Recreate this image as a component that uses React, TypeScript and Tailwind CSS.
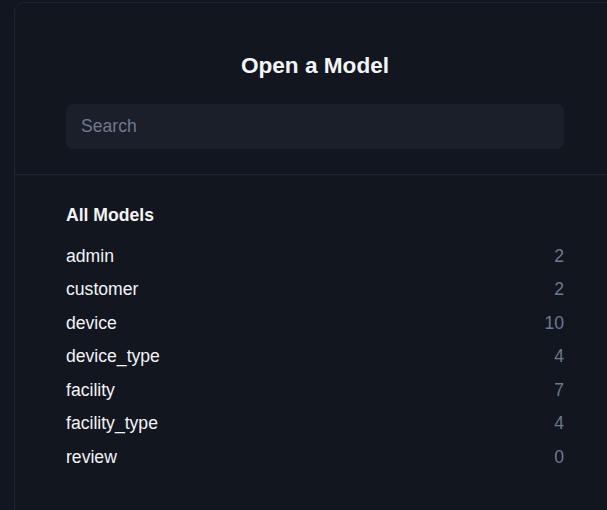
import React from "react";

const models: [string, number][] = [
  ["admin", 2],
  ["customer", 2],
  ["device", 10],
  ["device_type", 4],
  ["facility", 7],
  ["facility_type", 4],
  ["review", 0],
];

export default function App() {
  return (
    <div
      className="w-[607px] h-[510px] overflow-hidden bg-[#12161e] pt-[2px] pl-[14px]"
      style={{ fontFamily: '"Liberation Sans", Arial, sans-serif' }}
    >
      <div className="w-[602px] h-[540px] rounded-tl-[10px] rounded-tr-[10px] border border-[#1f2430] bg-[#12161f]">
        <div className="px-[51px] pt-[47px] pb-[25px] border-b border-[#1f2430]">
          <h1 className="text-center text-[22.6px] leading-[32px] font-bold text-[#f3f4f6]">
            Open a Model
          </h1>
          <input
            autoFocus
            placeholder="Search"
            className="mt-[22px] w-full h-[45px] rounded-[7px] bg-[#1b1f2a] px-[15px] text-[17.6px] text-[#e5e7eb] placeholder:text-[#6b7a90] caret-white outline-none"
          />
        </div>
        <div className="px-[51px] pt-[27px]">
          <div className="text-[17.6px] leading-[26px] font-bold text-[#f3f4f6]">All Models</div>
          <div className="mt-[11px] flex flex-col">
            {models.map(([name, n]) => (
              <div
                key={name}
                className="flex h-[33.5px] items-center justify-between text-[17.6px] leading-[26px]"
              >
                <span className="text-[#f3f4f6]">{name}</span>
                <span className="text-[#6b7a90]">{n}</span>
              </div>
            ))}
          </div>
        </div>
      </div>
    </div>
  );
}
